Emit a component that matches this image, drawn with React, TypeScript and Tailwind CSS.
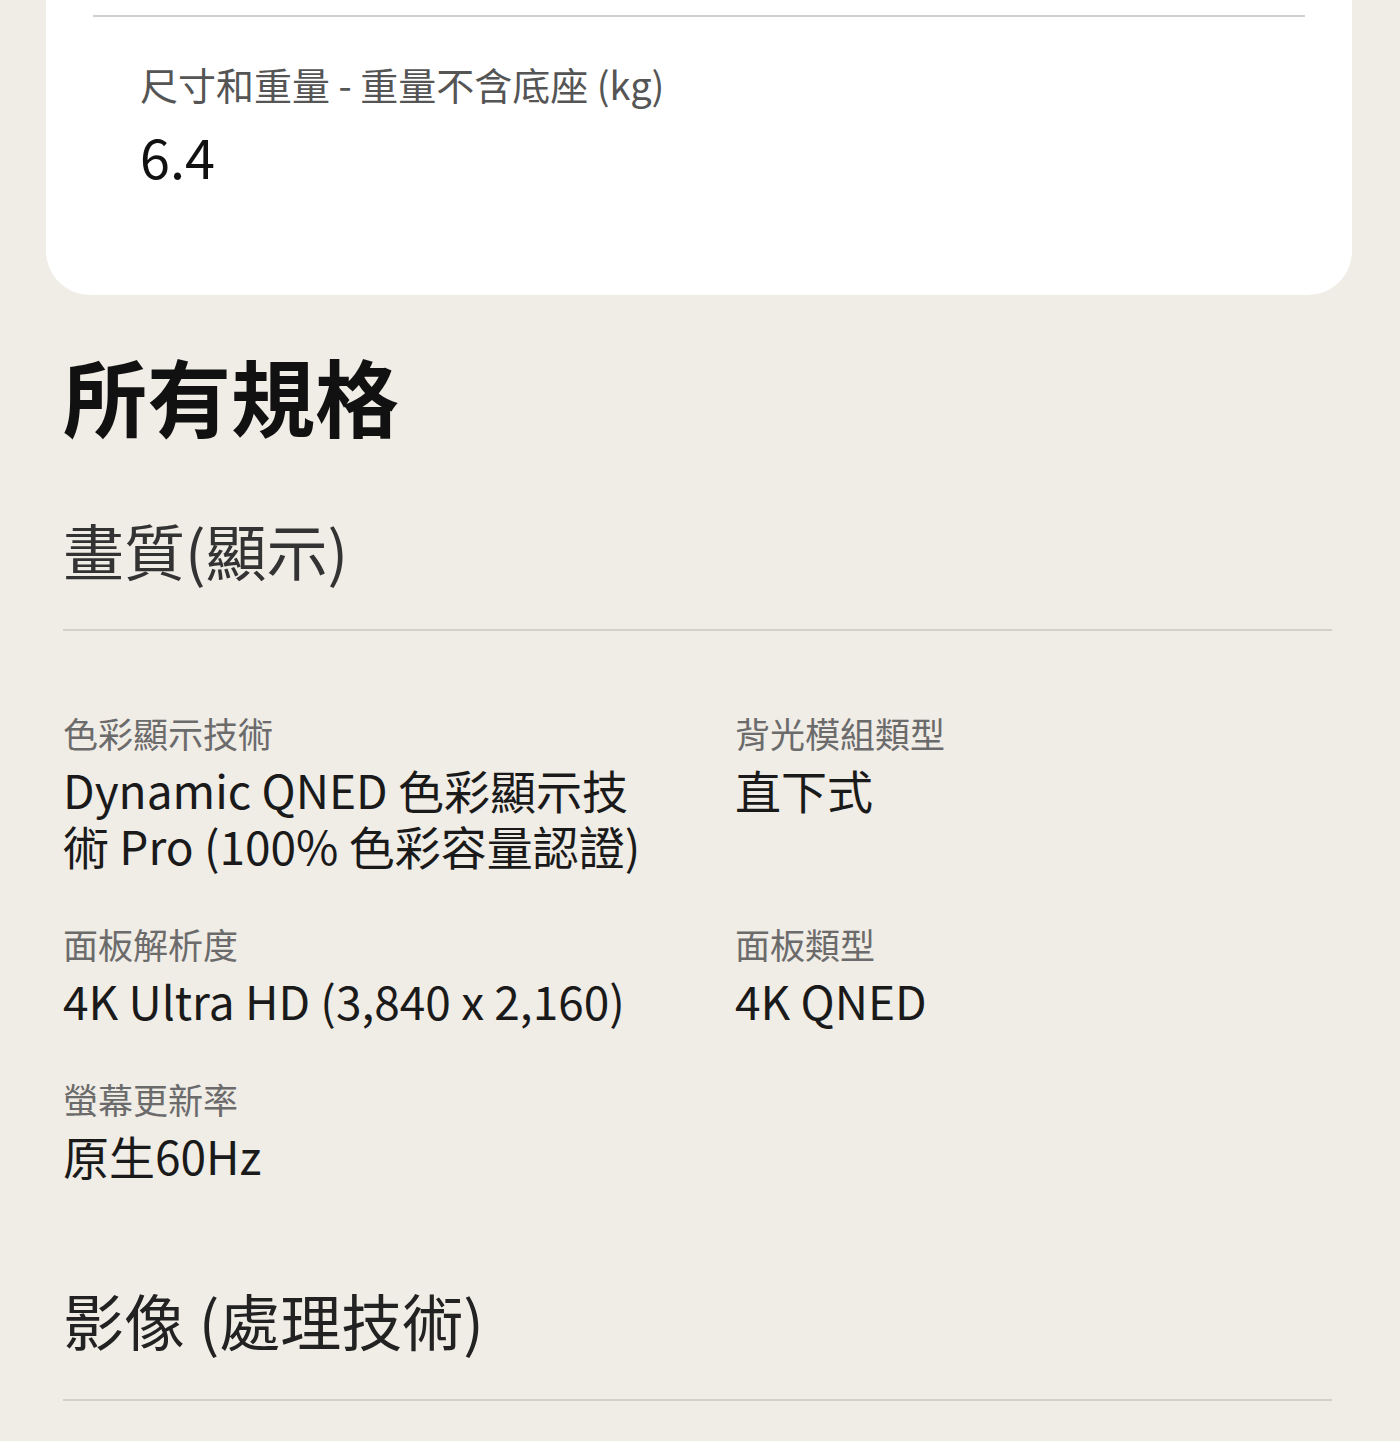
const font = {
  fontFamily: '"Noto Sans CJK TC", "Noto Sans", sans-serif',
};

interface Spec {
  label: string;
  value: string;
}

const displaySpecs: Spec[] = [
  { label: "色彩顯示技術", value: "Dynamic QNED 色彩顯示技術 Pro (100% 色彩容量認證)" },
  { label: "背光模組類型", value: "直下式" },
  { label: "面板解析度", value: "4K Ultra HD (3,840 x 2,160)" },
  { label: "面板類型", value: "4K QNED" },
  { label: "螢幕更新率", value: "原生60Hz" },
];

function SpecItem({ spec }: { spec: Spec }) {
  return (
    <div className="flex flex-col">
      <p className="text-[35px] leading-[46px] text-[#6b6b6b]">{spec.label}</p>
      <p className="mt-[5px] text-[46px] leading-[56px] text-[#1a1a1a]">
        {spec.value}
      </p>
    </div>
  );
}

export default function App() {
  return (
    <div className="min-h-[1441px] bg-[#f0ece6] overflow-hidden" style={font}>
      <div className="ml-[46px] mr-[48px] bg-white rounded-b-[44px] pt-[15px] pb-[108px]">
        <div className="mx-[47px] h-[2px] bg-[#cfcfcf]" />
        <div className="pl-[94px] pt-[42px]">
          <p className="text-[38px] leading-[50px] text-[#555]">
            尺寸和重量 - 重量不含底座 (kg)
          </p>
          <p className="mt-[16px] text-[54px] leading-[62px] text-[#111]">6.4</p>
        </div>
      </div>

      <div className="pl-[63px] pr-[68px]">
        <h1 className="mt-[50px] text-[84px] leading-[100px] font-bold text-[#111]">
          所有規格
        </h1>
        <h2 className="mt-[68px] text-[61px] leading-[74px] text-[#333]">
          畫質(顯示)
        </h2>
        <div className="mt-[42px] h-[2px] bg-[#d3cfc9]" />

        <div className="mt-[79px] grid grid-cols-[600px_1fr] gap-x-[72px] gap-y-[48px]">
          {displaySpecs.map((s, i) => (
            <SpecItem spec={s} key={i} />
          ))}
        </div>

        <h2 className="mt-[100px] text-[61px] leading-[74px] text-[#222]">
          影像 (處理技術)
        </h2>
        <div className="mt-[42px] h-[2px] bg-[#d3cfc9]" />
      </div>
    </div>
  );
}
